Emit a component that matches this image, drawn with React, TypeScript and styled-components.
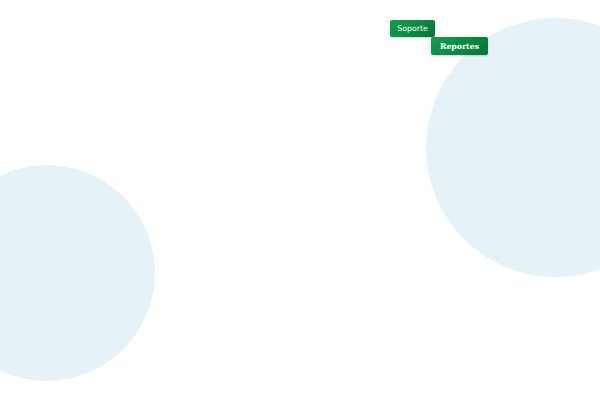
import styled, { createGlobalStyle } from "styled-components";

const GlobalStyle = createGlobalStyle`
  html, body {
    margin: 0;
    padding: 0;
    background: #ffffff;
  }
  body {
    font-family: "DejaVu Sans", sans-serif;
  }
`;

const Page = styled.main`
  position: relative;
  width: 600px;
  height: 400px;
  overflow: hidden;
  background: #ffffff;
`;

// decorative background discs
const Blob = styled.div<{ $size: number; $left: number; $top: number }>`
  position: absolute;
  left: ${(p) => p.$left}px;
  top: ${(p) => p.$top}px;
  width: ${(p) => p.$size}px;
  height: ${(p) => p.$size}px;
  border-radius: 50%;
  background: #e5f3f9;
  z-index: 0;
`;

const Nav = styled.nav`
  position: relative;
  z-index: 1;
  display: flex;
  flex-direction: column;
  align-items: flex-end;
  padding: 20px 112px 0 0;
`;

const NavButton = styled.button<{ $offset?: number }>`
  display: flex;
  align-items: center;
  justify-content: center;
  padding: 0;
  border: none;
  border-radius: 2px;
  color: #ffffff;
  background: linear-gradient(135deg, #139c4c 0%, #0b8a41 55%, #077439 100%);
  box-shadow: 0 1px 2px rgba(0, 0, 0, 0.18);
  margin-right: ${(p) => p.$offset ?? 0}px;
  cursor: pointer;
`;

const SupportButton = styled(NavButton)`
  width: 45px;
  height: 17px;
  font-family: "DejaVu Sans", sans-serif;
  font-size: 7.8px;
`;

const ReportsButton = styled(NavButton)`
  width: 57px;
  height: 18px;
  font-family: "DejaVu Serif", serif;
  font-weight: 700;
  font-size: 7.8px;
`;

export default function App() {
  return (
    <Page>
      <GlobalStyle />
      <Blob $size={259} $left={426} $top={18} />
      <Blob $size={216} $left={-61} $top={165} />
      <Nav>
        <SupportButton $offset={53}>Soporte</SupportButton>
        <ReportsButton>Reportes</ReportsButton>
      </Nav>
    </Page>
  );
}
